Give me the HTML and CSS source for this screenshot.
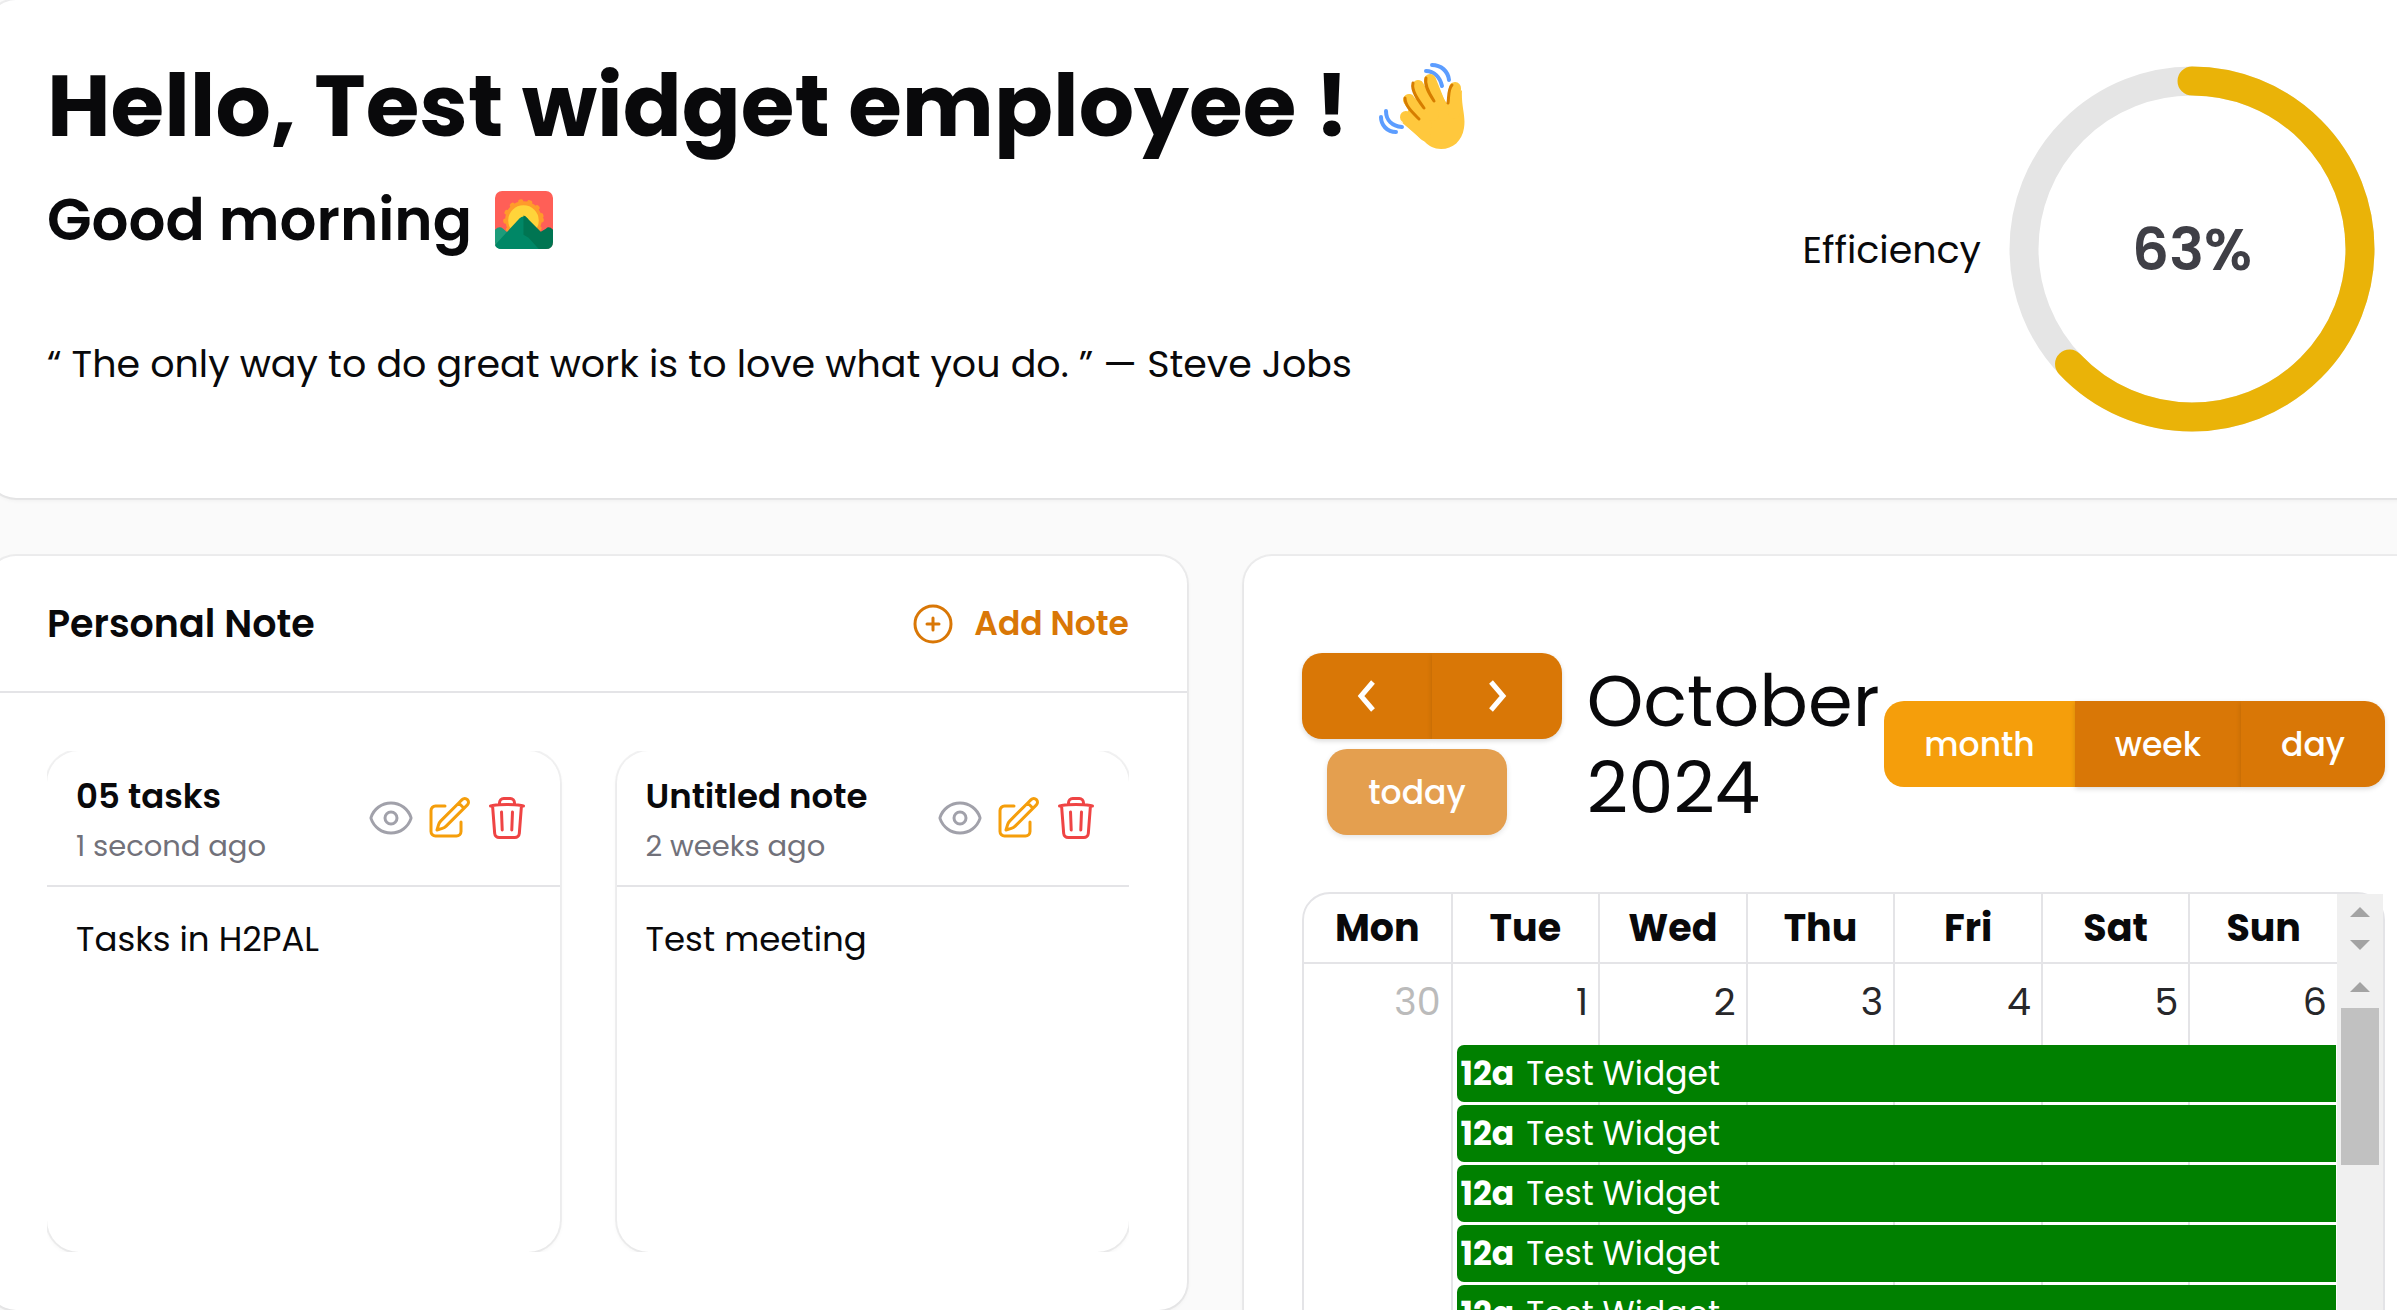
FILE: index.html
```html
<!DOCTYPE html>
<html lang="en">
<head>
  <meta charset="UTF-8" />
  <meta name="viewport" content="width=device-width, initial-scale=1.0"/>
  <title>Dashboard</title>
  <link rel="stylesheet" href="styles.css">
</head>
<body>
  <!-- shared icons -->
  <svg class="sprite" aria-hidden="true">
    <symbol id="eye" viewBox="0 0 24 24">
      <path d="M2.036 12.322a1.012 1.012 0 0 1 0-.639C3.423 7.51 7.36 4.5 12 4.5c4.638 0 8.573 3.007 9.963 7.178.07.207.07.431 0 .639C20.577 16.49 16.64 19.5 12 19.5c-4.638 0-8.573-3.007-9.963-7.178Z"/>
      <path d="M15 12a3 3 0 1 1-6 0 3 3 0 0 1 6 0Z"/>
    </symbol>
    <symbol id="pencil" viewBox="0 0 24 24">
      <path d="m16.862 4.487 1.687-1.688a1.875 1.875 0 1 1 2.652 2.652L10.582 16.07a4.5 4.5 0 0 1-1.897 1.13L6 18l.8-2.685a4.5 4.5 0 0 1 1.13-1.897l8.932-8.931Zm0 0L19.5 7.125M18 14v4.75A2.25 2.25 0 0 1 15.75 21H5.25A2.25 2.25 0 0 1 3 18.75V8.25A2.25 2.25 0 0 1 5.25 6H10"/>
    </symbol>
    <symbol id="trash" viewBox="0 0 24 24">
      <path d="m14.74 9-.346 9m-4.788 0L9.26 9m9.968-3.21c.342.052.682.107 1.022.166m-1.022-.165L18.16 19.673a2.25 2.25 0 0 1-2.244 2.077H8.084a2.25 2.25 0 0 1-2.244-2.077L4.772 5.79m14.456 0a48.108 48.108 0 0 0-3.478-.397m-12 .562c.34-.059.68-.114 1.022-.165m0 0a48.11 48.11 0 0 1 3.478-.397m7.5 0v-.916c0-1.18-.91-2.164-2.09-2.201a51.964 51.964 0 0 0-3.32 0c-1.18.037-2.09 1.022-2.09 2.201v.916m7.5 0a48.667 48.667 0 0 0-7.5 0"/>
    </symbol>
  </svg>

  <main class="dashboard">
    <section class="card hero">
      <div class="hero-text">
        <h1>Hello, Test widget employee !
          <svg class="wave" viewBox="0 0 86 86" role="img" aria-label="Waving hand">
            <g fill="none" stroke="#5c9dff" stroke-width="4" stroke-linecap="round">
              <path d="M53 2c9 0 16 6 17 15M47 8c8 0 14 6 16 15M2 54c0 8 6 15 15 15M7 48c0 9 6 15 16 16"/>
            </g>
            <path fill="#ffc83d" d="M24 60 33 38 58 20 63 32C67 40 69 42 71 40L83 27C82 44 87 52 85 65 83 78 74 86 62 86 55 86 50 83 46 79L21 58Z"/>
            <g fill="none" stroke="#ffc83d" stroke-width="12" stroke-linecap="round">
              <path d="M51 17 61 42M39 23 54 52M30 37 47 62M27 54 46 72M76 25 75 50"/>
            </g>
            <g fill="none" stroke="#d67d00" stroke-width="3" stroke-linecap="round">
              <path d="M47 15c-2 8 4 17 8 23M34 20c-2 8 6 18 11 25M26 35c0 8 8 15 14 21M73 22c-4 4-3 12-4 18"/>
            </g>
          </svg>
        </h1>
        <h2>Good morning
          <svg class="sunrise" viewBox="0 0 57 57" role="img" aria-label="Sunrise over mountains">
            <rect width="57" height="57" rx="7" fill="#ff5f57"/>
            <circle cx="28" cy="28" r="18" fill="none" stroke="#ff9b2b" stroke-width="4" stroke-linecap="round" stroke-dasharray="1 8"/>
            <circle cx="28" cy="28" r="18" fill="#ff9b2b"/>
            <circle cx="28" cy="29" r="15" fill="#ffd43a"/>
            <path fill="#1d9c7a" d="M0 38Q4 34 8 37L16 44V57H7Q0 57 0 50Z"/>
            <path fill="#008766" d="M0 53 24 27Q28 23 32 27L50 57H7Q1 57 0 53Z"/>
            <path fill="#007552" d="M28 24Q30 24 32 27L45 40 50 37Q53 34 57 38V50Q57 57 50 57H43L33 46 28 43Z"/>
          </svg>
        </h2>
        <p class="quote">“ The only way to do great work is to love what you do. ” — Steve Jobs</p>
      </div>
      <div class="efficiency">
        <span>Efficiency</span>
        <div class="ring">
          <svg viewBox="0 0 366 366" aria-hidden="true">
            <circle class="ring-track" cx="183" cy="183" r="168"/>
            <circle class="ring-value" cx="183" cy="183" r="168" pathLength="100"/>
          </svg>
          <strong>63%</strong>
        </div>
      </div>
    </section>

    <div class="columns">
      <section class="card">
        <header class="card-header">
          <h3>Personal Note</h3>
          <button type="button" class="add-note">
            <svg class="icon" viewBox="0 0 24 24"><path d="M12 9v6m3-3H9m12 0a9 9 0 1 1-18 0 9 9 0 0 1 18 0Z"/></svg>
            Add Note
          </button>
        </header>
        <div class="notes">
          <article class="note">
            <header>
              <div>
                <h4>05 tasks</h4>
                <time>1 second ago</time>
              </div>
              <div class="actions">
                <button type="button" class="view" aria-label="View"><svg class="icon"><use href="#eye"/></svg></button>
                <button type="button" class="edit" aria-label="Edit"><svg class="icon"><use href="#pencil"/></svg></button>
                <button type="button" class="delete" aria-label="Delete"><svg class="icon"><use href="#trash"/></svg></button>
              </div>
            </header>
            <p>Tasks in H2PAL</p>
          </article>
          <article class="note">
            <header>
              <div>
                <h4>Untitled note</h4>
                <time>2 weeks ago</time>
              </div>
              <div class="actions">
                <button type="button" class="view" aria-label="View"><svg class="icon"><use href="#eye"/></svg></button>
                <button type="button" class="edit" aria-label="Edit"><svg class="icon"><use href="#pencil"/></svg></button>
                <button type="button" class="delete" aria-label="Delete"><svg class="icon"><use href="#trash"/></svg></button>
              </div>
            </header>
            <p>Test meeting</p>
          </article>
        </div>
      </section>

      <section class="card calendar">
        <div class="toolbar">
          <div class="toolbar-left">
            <div class="btn-group nav">
              <button type="button" aria-label="Previous month"><svg viewBox="0 0 20 32"><path d="M16 2 4 16l12 14"/></svg></button>
              <button type="button" aria-label="Next month"><svg viewBox="0 0 20 32"><path d="m4 2 12 14L4 30"/></svg></button>
            </div>
            <button type="button" class="today" disabled>today</button>
          </div>
          <h2 class="month-title">October 2024</h2>
          <div class="btn-group views">
            <button type="button" class="active">month</button>
            <button type="button">week</button>
            <button type="button">day</button>
          </div>
        </div>

        <div class="grid">
          <div class="grid-body">
            <table>
              <thead>
                <tr><th>Mon</th><th>Tue</th><th>Wed</th><th>Thu</th><th>Fri</th><th>Sat</th><th>Sun</th></tr>
              </thead>
              <tbody>
                <tr><td class="other">30</td><td>1</td><td>2</td><td>3</td><td>4</td><td>5</td><td>6</td></tr>
              </tbody>
            </table>
            <div class="events">
              <a href="#"><b>12a</b>Test Widget</a>
              <a href="#"><b>12a</b>Test Widget</a>
              <a href="#"><b>12a</b>Test Widget</a>
              <a href="#"><b>12a</b>Test Widget</a>
              <a href="#"><b>12a</b>Test Widget</a>
            </div>
          </div>
          <div class="scrollbars" aria-hidden="true">
            <div class="head-scroll"><i class="up"></i><i class="down"></i></div>
            <div class="body-scroll"><i class="up"></i><div class="thumb"></div></div>
          </div>
        </div>
      </section>
    </div>
  </main>
</body>
</html>
```
FILE: styles.css
```css
* {
  box-sizing: border-box;
}
body {
  margin: 0;
  height: 100vh;
  overflow: hidden;
  background: #fafafa;
  color: #09090b;
  font-family: Poppins, Inter, sans-serif;
  font-size: 38px;
  line-height: 57px;
}
h1, h2, h3, h4, p {
  margin: 0;
}
button {
  border: 0;
  padding: 0;
  background: none;
  color: inherit;
  font: inherit;
  cursor: pointer;
}
.sprite {
  display: none;
}
.icon {
  display: block;
  width: 48px;
  height: 48px;
  fill: none;
  stroke: currentColor;
  stroke-width: 1.5;
  stroke-linecap: round;
  stroke-linejoin: round;
}
/* the dashboard bleeds past both window edges */
.dashboard {
  display: flex;
  flex-direction: column;
  gap: 58px;
  margin: 0 -46px 0 -12px;
}
.card {
  background: #fff;
  border-radius: 28px;
  box-shadow: 0 0 0 2px rgba(9, 9, 11, 0.05), 0 2px 5px rgba(0, 0, 0, 0.06);
}

/* greeting */
.hero {
  display: flex;
  justify-content: space-between;
  align-items: flex-start;
  padding: 58px 68px 66px 59px;
}
h1 {
  display: flex;
  align-items: center;
  gap: 30px;
  font-size: 87px;
  font-weight: 700;
  line-height: 96px;
}
.hero h2 {
  display: flex;
  align-items: center;
  gap: 23px;
  margin-top: 30px;
  font-size: 58px;
  font-weight: 600;
  line-height: 72px;
}
.wave {
  width: 86px;
  height: 86px;
}
.sunrise {
  width: 58px;
  height: 58px;
}
.quote {
  margin-top: 79px;
}
.efficiency {
  display: flex;
  align-items: center;
  gap: 28px;
  padding-top: 8px;
}
.ring {
  display: grid;
  place-items: center;
}
.ring svg {
  grid-area: 1 / 1;
  width: 366px;
  height: 366px;
  fill: none;
  stroke-width: 29;
  transform: rotate(-90deg);
}
.ring strong {
  grid-area: 1 / 1;
  color: #3f3f46;
  font-size: 58px;
  font-weight: 600;
}
.ring-track {
  stroke: #e5e5e5;
}
.ring-value {
  stroke: #eab308;
  stroke-linecap: round;
  stroke-dasharray: 63 100;
}

.columns {
  display: grid;
  grid-template-columns: 1fr 1fr;
  align-items: start;
  gap: 57px;
}

/* notes */
.card-header {
  display: flex;
  justify-content: space-between;
  align-items: center;
  height: 137px;
  padding: 0 58px 0 59px;
  border-bottom: 2px solid #e4e4e7;
}
.card-header h3 {
  font-size: 38px;
  font-weight: 600;
}
.add-note {
  display: flex;
  align-items: center;
  gap: 17px;
  color: #d97706;
  font-size: 33px;
  font-weight: 600;
}
.notes {
  display: grid;
  grid-template-columns: 1fr 1fr;
  gap: 57px;
  margin: 58px 58px 58px 59px;
  overflow: hidden;
}
.note {
  min-height: 501px;
  border-radius: 32px;
  box-shadow: 0 0 0 2px rgba(9, 9, 11, 0.05), 0 2px 5px rgba(0, 0, 0, 0.06);
}
.note header {
  display: flex;
  justify-content: space-between;
  align-items: center;
  padding: 20px 29px 14px 29px;
  border-bottom: 2px solid #e4e4e7;
}
.note h4 {
  font-size: 34px;
  font-weight: 600;
  line-height: 50px;
}
.note time {
  display: block;
  color: #71717a;
  font-size: 29px;
  line-height: 50px;
}
.note p {
  padding: 27px 29px;
  font-size: 34px;
  line-height: 50px;
}
.actions {
  display: flex;
  gap: 10px;
  padding-bottom: 6px;
}
.view {
  color: #a1a1aa;
}
.edit {
  color: #f59e0b;
}
.delete {
  color: #ef4444;
}

/* calendar */
.calendar {
  padding: 97px 58px 58px;
}
.toolbar {
  display: flex;
  align-items: center;
  justify-content: space-between;
  margin-bottom: 57px;
}
.toolbar button {
  height: 86px;
  background: #d97706;
  box-shadow: 0 2px 5px rgba(0, 0, 0, 0.15);
  color: #fff;
  font-size: 33px;
  font-weight: 500;
}
.toolbar-left {
  display: flex;
  flex-direction: column;
  gap: 10px;
}
.btn-group {
  display: flex;
}
.btn-group button:first-child {
  border-radius: 20px 0 0 20px;
}
.btn-group button:last-child {
  border-radius: 0 20px 20px 0;
}
.nav button {
  width: 130px;
}
.nav svg {
  display: block;
  width: 20px;
  height: 32px;
  margin: 0 auto;
  fill: none;
  stroke: #fff;
  stroke-width: 5;
}
.toolbar .today {
  width: 180px;
  margin-left: 25px;
  border-radius: 20px;
  opacity: 0.7;
}
.month-title {
  width: min-content;
  margin-left: 20px;
  font-size: 72px;
  font-weight: 400;
  line-height: 87px;
}
.views button {
  padding: 0 40px;
}
.toolbar .active {
  background: #f59e0b;
  box-shadow: none;
}
.grid {
  display: flex;
  height: 760px;
  border: 2px solid #e4e4e7;
  border-radius: 28px;
}
.grid-body {
  position: relative;
  flex: 1;
}
table {
  width: 100%;
  height: 100%;
  table-layout: fixed;
  border-collapse: collapse;
}
th {
  height: 69px;
  padding: 0 0 2px;
  border-bottom: 2px solid #e4e4e7;
  font-weight: 700;
}
td {
  padding: 9px 10px 0 0;
  color: #27272a;
  text-align: right;
  vertical-align: top;
}
th + th, td + td {
  border-left: 2px solid #e4e4e7;
}
.other {
  color: #bbb;
}
.events {
  position: absolute;
  top: 151px;
  left: calc(100% / 7 + 5px);
  right: 1px;
  display: flex;
  flex-direction: column;
  gap: 3px;
}
.events a {
  padding-left: 4px;
  border-radius: 7px 0 0 7px;
  background: green;
  color: #fff;
  font-size: 33px;
  text-decoration: none;
}
.events b {
  margin-right: 12px;
}
.scrollbars {
  width: 46px;
  background: #f0f0f0;
}
.head-scroll {
  display: flex;
  flex-direction: column;
  align-items: center;
  gap: 23px;
  height: 69px;
  padding-top: 13px;
}
.body-scroll {
  display: flex;
  flex-direction: column;
  align-items: center;
  gap: 16px;
  padding-top: 19px;
}
.up, .down {
  border: 10px solid transparent;
}
.up {
  border-top: 0;
  border-bottom-color: #a3a3a3;
}
.down {
  border-bottom: 0;
  border-top-color: #a3a3a3;
}
.thumb {
  width: 38px;
  height: 157px;
  background: #c1c1c1;
}
```
